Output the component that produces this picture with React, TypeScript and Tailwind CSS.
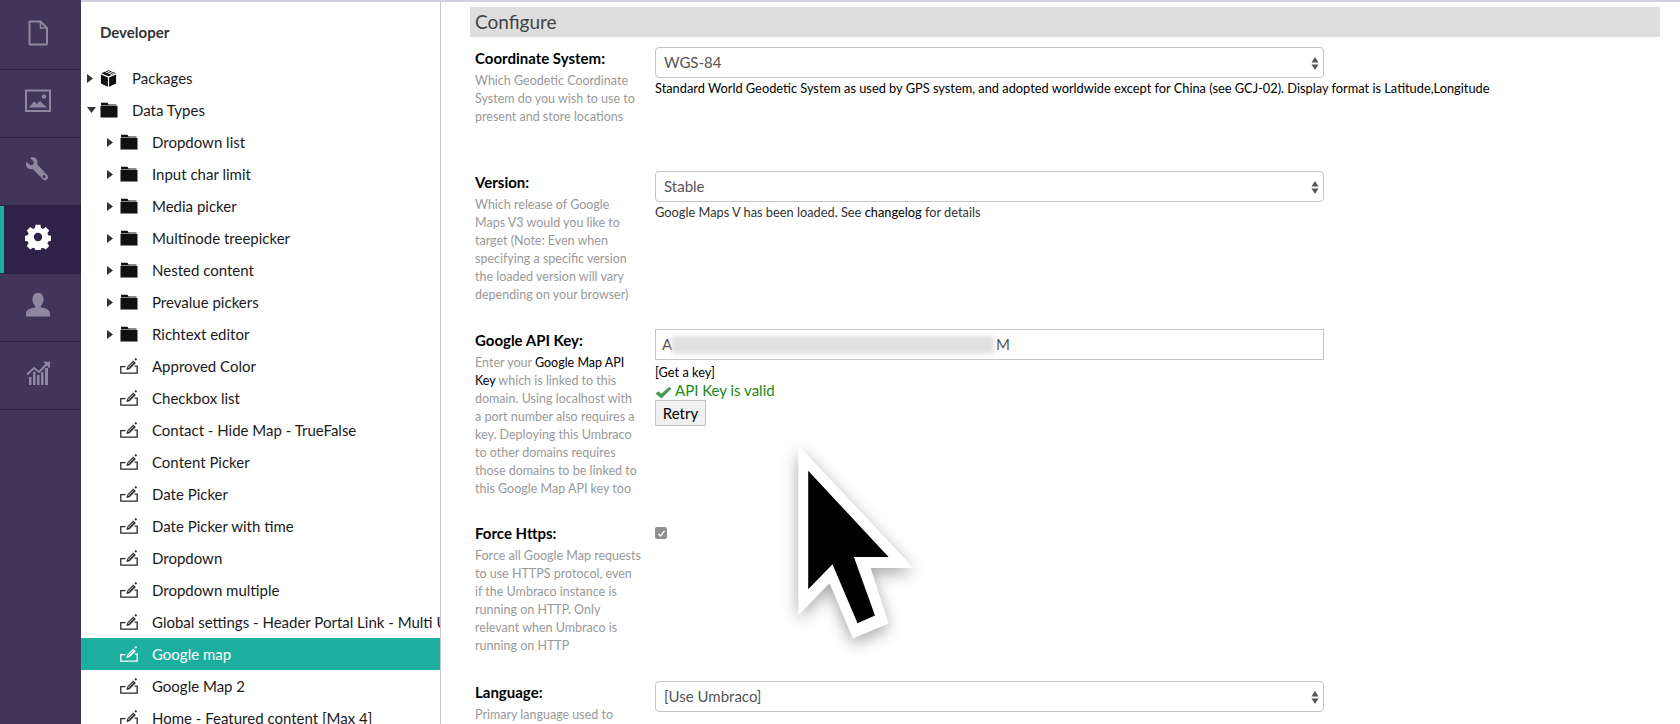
import React from "react";

const FONT = "font-['Lato','Noto_Sans',sans-serif]";

function FileIcon() {
  return (
    <svg width="26" height="26" viewBox="0 0 26 26" fill="none">
      <path d="M4.500 1.500H15.500L22 8V23.600a.9.9 0 0 1-.9.9H5.400a.9.9 0 0 1-.9-.9V1.500Z" stroke="#8d87a0" strokeWidth="2" strokeLinejoin="round" />
      <path d="M15.500 1.500V8H22" stroke="#8d87a0" strokeWidth="1.600" />
    </svg>
  );
}
function ImageIcon() {
  return (
    <svg width="26" height="24" viewBox="0 0 26 24" fill="none">
      <rect x="1" y="1.500" width="24" height="20.500" stroke="#8d87a0" strokeWidth="2" />
      <path d="M4 18.500 9 12.500l3 2.500 3-3 7 6.500Z" fill="#8d87a0" />
      <circle cx="19" cy="7.500" r="2.200" fill="#8d87a0" />
    </svg>
  );
}
function WrenchIcon() {
  return (
    <svg width="26" height="26" viewBox="0 0 26 26" fill="none">
      <path d="M7.500 1.200c-1 .1-2 .4-2.700.9l4 3.300-.6 3-3 .8L1.600 6c-.6 1-.8 2.400-.4 3.800.7 2.500 3.300 4 5.900 3.400l.7-.2 10 10.300c1 1.100 2.800 1.300 4 .4 1.500-1.100 1.700-3.200.5-4.500L12.400 8.400l.2-.9C13 4 10.800.9 7.500 1.200Zm13 19.400a1.500 1.500 0 1 1-3 0 1.500 1.500 0 0 1 3 0Z" fill="#8d87a0" fillRule="evenodd" />
    </svg>
  );
}
function GearIcon() {
  return (
    <svg width="26" height="26" viewBox="0 0 26 26">
      <path fillRule="evenodd" fill="#fff" d="M10.600.8h4.800l.7 3.300 1.900.8 2.800-1.800 3.400 3.400-1.800 2.800.8 1.900 3.300.7v4.800l-3.300.7-.8 1.900 1.800 2.800-3.400 3.400-2.800-1.800-1.900.8-.7 3.300h-4.800l-.7-3.300-1.900-.8-2.800 1.800-3.400-3.400 1.800-2.800-.8-1.900-3.300-.7v-4.800l3.300-.7.8-1.900-1.800-2.800 3.400-3.400 2.800 1.800 1.900-.8ZM13 8.800a4.200 4.200 0 1 0 0 8.400 4.200 4.200 0 0 0 0-8.400Z" />
    </svg>
  );
}
function UserIcon() {
  return (
    <svg width="26" height="26" viewBox="0 0 26 26">
      <path fill="#8d87a0" d="M13 .8c-3.400 0-5.600 2.900-5.600 6.600 0 2.800 1.100 5 2.700 6.200v2c-3.400.5-9.100 1.800-9.100 5.600v3.400h24v-3.400c0-3.800-5.700-5.100-9.100-5.600v-2c1.600-1.200 2.700-3.400 2.700-6.200C18.600 3.700 16.400.8 13 .8Z" />
    </svg>
  );
}
function ChartIcon() {
  return (
    <svg width="26" height="24" viewBox="0 0 26 24" fill="none">
      <path d="M2 13.500 9 7l5 4 8-8" stroke="#8d87a0" strokeWidth="2" />
      <path d="M18 .8h7v7Z" fill="#8d87a0" />
      <path fill="#8d87a0" d="M4 16h2.500v8H4Zm4-5h2.500v13H8Zm4 3h2.500v10H12Zm4-3h2.500v13H16Zm4-4h3v17h-3Z" />
    </svg>
  );
}

function Caret({ open }: { open?: boolean }) {
  return open ? (
    <svg width="9" height="6" viewBox="0 0 9 6"><path d="M0 0h9L4.500 6Z" fill="#333" /></svg>
  ) : (
    <svg width="6" height="9" viewBox="0 0 6 9"><path d="M0 0v9l6-4.500Z" fill="#333" /></svg>
  );
}
function Folder() {
  return (
    <svg width="18" height="16" viewBox="0 0 18 16">
      <path d="M1 3V.8h6.500l1 1.700H16.500v1H1Z" fill="#111" />
      <rect x="0.500" y="4" width="17" height="11.500" fill="#111" />
    </svg>
  );
}
function PackageIcon() {
  return (
    <svg width="17" height="17" viewBox="0 0 17 17">
      <path d="M8.500.3 15.800 3.200 8.500 6.200 1.200 3.200Z" fill="#111" />
      <path d="M5.200 1.700l7 3M7.500 1.100l7 3" stroke="#fff" strokeWidth=".9" />
      <path d="M.9 4.500 7.900 7.400V16.700L.9 13.600ZM16.100 4.500 9.100 7.400V16.700L16.100 13.600Z" fill="#111" />
    </svg>
  );
}
function DataTypeIcon({ white }: { white?: boolean }) {
  const c = white ? "#fff" : "#2a2a2a";
  const inner = white ? "#1cae9f" : "#fff";
  return (
    <svg width="18" height="16" viewBox="0 0 18 16" fill="none">
      <path d="M5.500 8.700H.8v6.500h16.400V8.200h-2.500" stroke={c} strokeWidth="1.300" />
      <path d="M6.500 12.200l.7-3.400 6-6.300 2.600 2.400-6 6.200Z" fill={c} />
      <path d="M8.200 9.800l5.200-5.400" stroke={inner} strokeWidth=".9" />
      <circle cx="15.800" cy="1.300" r="1.100" fill={c} />
    </svg>
  );
}

const folders = ["Dropdown list", "Input char limit", "Media picker", "Multinode treepicker", "Nested content", "Prevalue pickers", "Richtext editor"];
const items = ["Approved Color", "Checkbox list", "Contact - Hide Map - TrueFalse", "Content Picker", "Date Picker", "Date Picker with time", "Dropdown", "Dropdown multiple", "Global settings - Header Portal Link - Multi Url", "Google map", "Google Map 2", "Home - Featured content [Max 4]"];

function Sidebar() {
  const icons = [<FileIcon />, <ImageIcon />, <WrenchIcon />, <GearIcon />, <UserIcon />, <ChartIcon />];
  return (
    <nav className="w-[81px] shrink-0 bg-[#413659] pt-[2px]">
      {icons.map((ic, i) => (
        <div key={i} className={`relative flex h-[68px] items-center justify-center border-b border-[#2e2546] pb-[5px] ${i === 3 ? "bg-[#2e2248]" : ""}`}>
          {i === 3 && <span className="absolute inset-y-0 left-0 w-1 bg-[#1cae9f]" />}
          <span className="ml-[-5px] flex">{ic}</span>
        </div>
      ))}
    </nav>
  );
}

function TreeRow({ depth, icon, caret, active, children }: { depth: number; icon: React.ReactNode; caret?: React.ReactNode; active?: boolean; children: React.ReactNode }) {
  return (
    <div className={`flex h-8 items-center whitespace-nowrap ${depth ? "pl-[26px]" : "pl-[6px]"} ${active ? "bg-[#1cae9f] text-white" : "text-[#1b1b1b]"}`}>
      <span className="flex w-[13px] shrink-0 items-center">{caret}</span>
      <span className="flex w-[32px] shrink-0 items-center">{icon}</span>
      <span className="min-w-0 flex-1 overflow-hidden">{children}</span>
    </div>
  );
}

function Tree() {
  return (
    <aside className="w-[360px] shrink-0 overflow-hidden border-r border-[#c8c5d6] pt-[18px] text-[15px]">
      <div className="h-[42px] pl-[19px] text-[15px] font-bold leading-6 text-[#333]">Developer</div>
      <div>
        <TreeRow depth={0} caret={<Caret />} icon={<PackageIcon />}>Packages</TreeRow>
        <TreeRow depth={0} caret={<Caret open />} icon={<Folder />}>Data Types</TreeRow>
        {folders.map((f) => (
          <TreeRow key={f} depth={1} caret={<Caret />} icon={<Folder />}>{f}</TreeRow>
        ))}
        {items.map((f) => (
          <TreeRow key={f} depth={1} active={f === "Google map"} icon={<DataTypeIcon white={f === "Google map"} />}>{f}</TreeRow>
        ))}
      </div>
    </aside>
  );
}

function Select({ value }: { value: string }) {
  return (
    <div className="relative flex h-[31px] w-[669px] items-center rounded-[4px] border border-[#c4c4c4] bg-white pl-[8px] text-[15px] text-[#555]">
      {value}
      <svg className="absolute right-[4px] top-[9px]" width="8" height="13" viewBox="0 0 8 13">
        <path d="M4 0l3.500 5.500h-7ZM4 13 .5 7.500h7Z" fill="#555" />
      </svg>
    </div>
  );
}

function Row({ label, desc, pb, children }: { label: string; desc: React.ReactNode; pb: string; children?: React.ReactNode }) {
  return (
    <div className={`flex ${pb}`}>
      <div className="w-[180px] shrink-0 pl-[5px]">
        <div className="text-[15px] font-bold leading-[22px] text-black">{label}</div>
        <div className="mt-[3px] whitespace-nowrap text-[12.500px] leading-[18px] text-[#999]">{desc}</div>
      </div>
      <div className="min-w-0 flex-1 pl-[5px] text-[12.800px] text-black">{children}</div>
    </div>
  );
}

function Cursor() {
  return (
    <svg className="pointer-events-none absolute left-[770px] top-[430px] drop-shadow-[0_5px_8px_rgba(0,0,0,0.35)]" width="170" height="230" viewBox="770 430 170 230">
      <path d="M798.200 445 913.600 567.900H870.700L888.600 623.600 852.900 638.600 829.600 583.200 798.200 615.400Z" fill="#fff" />
      <path d="M808.200 470.700 888.600 557.100H853.900L875 615.400 857.500 623.200 832.500 564.300 808.200 589.300Z" fill="#000" />
    </svg>
  );
}

export default function App() {
  return (
    <div className={`relative flex h-[724px] w-[1680px] overflow-hidden bg-white ${FONT}`}>
      <Sidebar />
      <div className="flex min-w-0 flex-1 flex-col">
        <div className="h-[2px] shrink-0 bg-[#d2d0de]" />
        <div className="flex min-h-0 flex-1">
          <Tree />
          <main className="min-w-0 flex-1 pl-[29px] pr-5 pt-[5px]">
            <div className="h-[30px] bg-[#dedede] pl-[5px] text-[19px] leading-[30px] text-[#444]">Configure</div>
            <div className="pt-[10px]">
              <Row label="Coordinate System:" pb="h-[124px]" desc={<>Which Geodetic Coordinate<br />System do you wish to use to<br />present and store locations</>}>
                <Select value="WGS-84" />
                <div className="mt-[1px] leading-[18px]">Standard World Geodetic System as used by GPS system, and adopted worldwide except for China (see GCJ-02). Display format is Latitude,Longitude</div>
              </Row>
              <Row label="Version:" pb="h-[158px]" desc={<>Which release of Google<br />Maps V3 would you like to<br />target (Note: Even when<br />specifying a specific version<br />the loaded version will vary<br />depending on your browser)</>}>
                <Select value="Stable" />
                <div className="mt-[1px] leading-[18px] text-[#333]">Google Maps V has been loaded. See <span className="text-black">changelog</span> for details</div>
              </Row>
              <Row label="Google API Key:" pb="h-[193px]" desc={<>Enter your <span className="text-black">Google Map API</span><br /><span className="text-black">Key</span> which is linked to this<br />domain. Using localhost with<br />a port number also requires a<br />key. Deploying this Umbraco<br />to other domains requires<br />those domains to be linked to<br />this Google Map API key too</>}>
                <div className="relative flex h-[31px] w-[669px] items-center justify-between border border-[#c4c4c4] pl-[6px] text-[15px] text-[#555]">
                  <span>A</span>
                  <span className="mr-[313px]">M</span>
                  <span className="absolute left-[16px] top-[6px] h-[18px] w-[322px] bg-[#e0e0e0] blur-[2px]" />
                </div>
                <div className="mt-[3px] leading-[18px]">[Get a key]</div>
                <div className="flex h-[19px] items-center gap-[3px] text-[15px] text-[#178a17]">
                  <svg className="mt-[3px]" width="17" height="13" viewBox="0 0 17 13"><path d="M.5 7.500l3-2.300 2.800 2.500L14 1l2.500 1.500L6.500 12.500Z" fill="#4a9a55" /></svg>
                  API Key is valid
                </div>
                <div className="flex h-[26px] w-[51px] items-center justify-center border border-[#c4c4c4] bg-[#f0f0f0] text-[15px] text-black">Retry</div>
              </Row>
              <Row label="Force Https:" pb="h-[159px]" desc={<>Force all Google Map requests<br />to use HTTPS protocol, even<br />if the Umbraco instance is<br />running on HTTP. Only<br />relevant when Umbraco is<br />running on HTTP</>}>
                <div className="flex h-[22px] items-center">
                  <span className="flex h-3 w-3 items-center justify-center rounded-[2px] bg-[#8f8f8f]">
                    <svg width="9" height="9" viewBox="0 0 9 9" fill="none"><path d="M1.500 5l2 2 4-5" stroke="#fff" strokeWidth="1.300" /></svg>
                  </span>
                </div>
              </Row>
              <Row label="Language:" pb="h-[124px]" desc="Primary language used to">
                <Select value="[Use Umbraco]" />
              </Row>
            </div>
          </main>
        </div>
      </div>
      <Cursor />
    </div>
  );
}
